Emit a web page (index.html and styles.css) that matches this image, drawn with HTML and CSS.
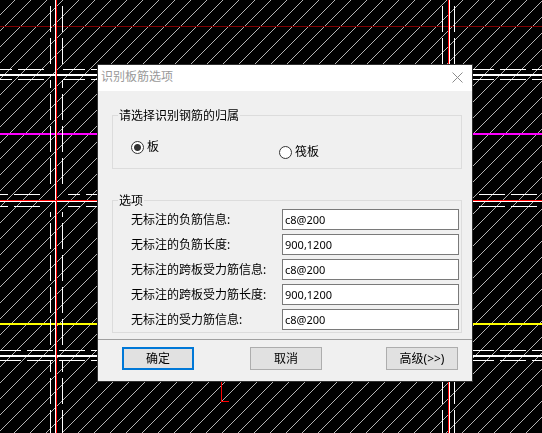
FILE: index.html
```html
<!DOCTYPE html>
<html lang="zh-CN">
<head>
<meta charset="utf-8">
<title>识别板筋选项</title>
<link rel="stylesheet" href="styles.css">
</head>
<body>
<svg class="drawing" aria-hidden="true" shape-rendering="crispEdges">
  <defs>
    <pattern id="hatch" width="16" height="16" patternUnits="userSpaceOnUse">
      <path d="M-1 16L16 -1M15 16L17 14" stroke="#b4b4b4"/>
    </pattern>
  </defs>
  <rect width="100%" height="100%" fill="#000"/>
  <rect width="100%" height="100%" fill="url(#hatch)"/>
  <rect y="26" width="100%" height="1" fill="#800000"/>
  <rect y="74" width="100%" height="2" fill="#fff"/>
  <rect y="133" width="100%" height="2" fill="#f0f"/>
  <rect y="201" width="100%" height="1" fill="#fff"/>
  <rect y="323" width="100%" height="2" fill="#ff0"/>
  <rect y="355" width="100%" height="2" fill="#fff"/>
  <g stroke="#fff" stroke-dasharray="26 6">
    <path d="M50.5 6V64M62.5 6V64M442.5 6V64M454.5 6V64"/>
    <path stroke-dashoffset="18" d="M50.5 80V185M62.5 80V185"/>
    <path stroke-dashoffset="21" d="M50.5 212V345M62.5 212V345"/>
    <path stroke-dashoffset="15" d="M50.5 361V433M62.5 361V433M442.5 361V433M454.5 361V433"/>
    <path stroke-dashoffset="14" d="M0 69.5H45M0 79.5H45"/>
    <path stroke-dashoffset="4" d="M63 69.5H120M63 79.5H120M472 69.5H542M472 79.5H542"/>
    <path stroke-dashoffset="18" d="M0 194.5H41M0 206.5H41"/>
    <path stroke-dashoffset="14" d="M68 194.5H120M68 206.5H120"/>
    <path d="M479 194.5H542M479 206.5H542"/>
    <path stroke-dashoffset="5" d="M0 350.5H120M0 360.5H120"/>
    <path stroke-dashoffset="4" d="M472 350.5H542M472 360.5H542"/>
  </g>
  <rect x="55" width="1" height="100%" fill="#fff"/>
  <rect x="449" width="1" height="100%" fill="#fff"/>
  <rect y="200" width="100%" height="1" fill="#f00"/>
  <rect x="56" width="1" height="100%" fill="#f00"/>
  <rect x="448" width="1" height="100%" fill="#f00"/>
  <path d="M221.5 380V401.5H229" fill="none" stroke="#f00"/>
</svg>

<form class="dialog" role="dialog" aria-labelledby="title">
  <header class="titlebar">
    <h1 id="title">识别板筋选项</h1>
    <button class="close" type="button" aria-label="关闭">
      <svg width="11" height="11" viewBox="0 0 11 11"><path d="M.5 .5L10.5 10.5M10.5 .5L.5 10.5"/></svg>
    </button>
  </header>
  <div class="content">
    <fieldset class="owner">
      <legend>请选择识别钢筋的归属</legend>
      <label class="choice"><input type="radio" name="owner" checked>板</label>
      <label class="choice lower"><input type="radio" name="owner">筏板</label>
    </fieldset>
    <fieldset class="options">
      <legend>选项</legend>
      <label for="f1">无标注的负筋信息:</label><input id="f1" type="text" value="c8@200">
      <label for="f2">无标注的负筋长度:</label><input id="f2" type="text" value="900,1200">
      <label for="f3">无标注的跨板受力筋信息:</label><input id="f3" type="text" value="c8@200">
      <label for="f4">无标注的跨板受力筋长度:</label><input id="f4" type="text" value="900,1200">
      <label for="f5">无标注的受力筋信息:</label><input id="f5" type="text" value="c8@200">
    </fieldset>
  </div>
  <footer class="actions">
    <button class="button primary" type="submit">确定</button>
    <button class="button" type="button">取消</button>
    <button class="button more" type="button">高级(&gt;&gt;)</button>
  </footer>
</form>
</body>
</html>
```
FILE: styles.css
```css
* {
  box-sizing: border-box;
}

body {
  margin: 0;
  min-height: 100vh;
  overflow: hidden;
  background: #000;
  color: #000;
  font: 12px/16px "Noto Sans", "Noto Sans CJK SC", sans-serif;
}

.drawing {
  position: fixed;
  inset: 0;
  width: 100%;
  height: 100%;
}

.dialog {
  position: absolute;
  left: 98px;
  top: 65px;
  width: 374px;
  background: #f0f0f0;
  box-shadow: 0 0 0 1px #303030;
}

.titlebar {
  display: flex;
  align-items: center;
  justify-content: space-between;
  height: 26px;
  padding: 0 9px 2px 3px;
  background: #fff;
}

.titlebar h1 {
  margin: 0;
  color: #999;
  font-size: 12px;
  font-weight: 400;
}

.close {
  display: flex;
  padding: 0;
  border: 0;
  background: none;
}

.close svg {
  fill: none;
  stroke: #8c8c8c;
}

.content {
  padding: 15px 10px 6px 14px;
}

fieldset {
  min-width: 0;
  margin: 0;
  border: 1px solid #dcdcdc;
}

legend {
  margin-left: -13px;
  padding: 2px 1px 0;
}

.owner {
  display: grid;
  grid-template-columns: 148px 1fr;
  align-items: start;
  height: 63px;
  padding: 15px 18px 0;
}

.choice {
  display: flex;
  align-items: center;
  gap: 3px;
}

.lower {
  margin-top: 5px;
}

.choice input {
  appearance: none;
  width: 13px;
  height: 13px;
  margin: 0;
  border: 1px solid #333;
  border-radius: 50%;
  background: #fff;
}

.choice input:checked {
  background: radial-gradient(circle, #333 3px, #fff 4px);
}

.options {
  display: grid;
  grid-template-columns: 151px 1fr;
  row-gap: 4px;
  align-items: center;
  margin-top: 22px;
  padding: 0 2px 2px 18px;
}

.options input {
  width: 100%;
  min-width: 0;
  height: 21px;
  padding: 0 2px;
  border: 1px solid #7a7a7a;
  border-radius: 0;
  background: #fff;
  color: #000;
  font: 11px/16px "Noto Sans", sans-serif;
}

.actions {
  display: flex;
  gap: 56px;
  padding: 7px 14px 11px 24px;
  border-top: 1px solid #a0a0a0;
}

.button {
  width: 72px;
  height: 23px;
  padding: 0;
  border: 1px solid #adadad;
  background: #e1e1e1;
  color: #000;
  font: inherit;
}

.primary {
  border: 2px solid #0078d7;
}

.more {
  margin-left: auto;
}
```
